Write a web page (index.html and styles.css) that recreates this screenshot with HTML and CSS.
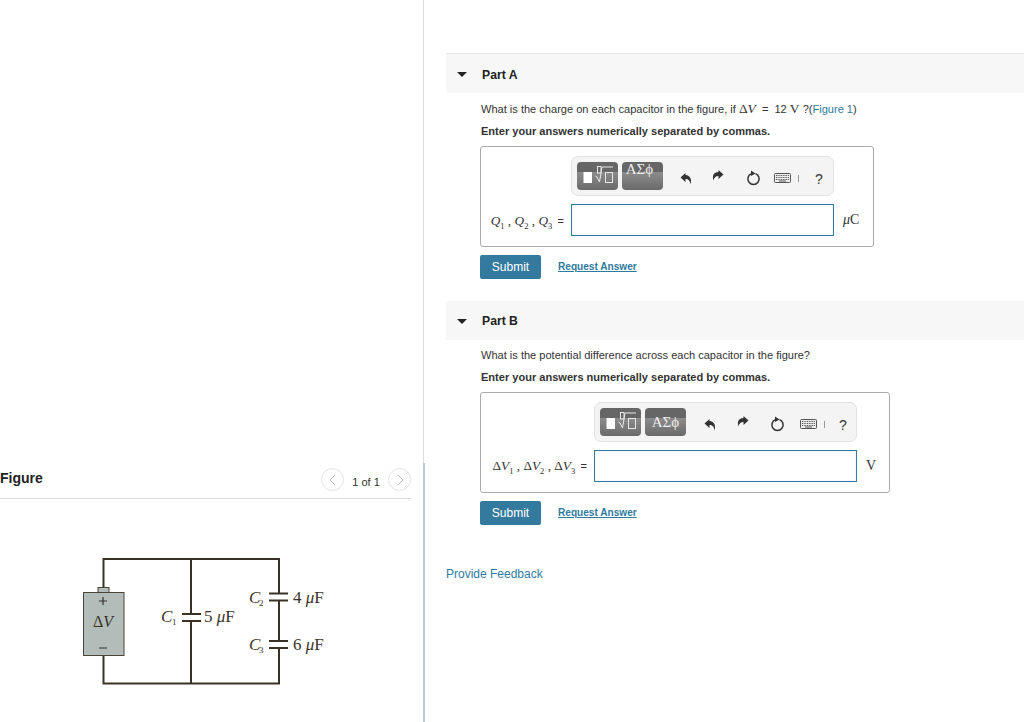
FILE: index.html
```html
<!DOCTYPE html>
<html lang="en">
<head>
<meta charset="utf-8">
<title>Capacitors</title>
<link rel="stylesheet" href="styles.css">
</head>
<body>
<div class="page">
  <aside class="figure-pane">
    <header class="figure-head">
      <h2 class="figure-title">Figure</h2>
      <div class="pager">
        <span class="pager-btn"><svg width="22" height="22" viewBox="0 0 22 22"><path d="M13 6l-5 5 5 5" class="chev"/></svg></span>
        <span class="pager-text">1 of 1</span>
        <span class="pager-btn"><svg width="22" height="22" viewBox="0 0 22 22"><path d="M9 6l5 5-5 5" class="chev"/></svg></span>
      </div>
    </header>
    <svg class="circuit" width="411" height="223" viewBox="0 499 411 223">
      <path class="wire" d="M103.5 588V559H279V593M279 601V641M279 649V683.5H103.5V655M191 559V614M191 621.500V684"/>
      <rect class="batt-cap" x="98" y="587.500" width="11" height="5"/>
      <rect class="batt" x="83.500" y="592.500" width="40.500" height="63"/>
      <path class="sign" d="M99 601h8M103 597v8M99 648h8"/>
      <path class="plate" d="M182 614h19M182 621h19M269 593.500h19M269 600.500h19M269 641h19M269 648h19"/>
      <text class="ckt ckt-dv" x="93" y="627">Δ<tspan class="ital">V</tspan></text>
      <text class="ckt ital" x="161" y="622">C</text><text class="ckt-sub" x="172" y="625">1</text>
      <text class="ckt" x="204" y="622">5 <tspan class="ital">μ</tspan>F</text>
      <text class="ckt ital" x="249" y="603">C</text><text class="ckt-sub" x="259" y="606">2</text>
      <text class="ckt" x="293" y="603">4 <tspan class="ital">μ</tspan>F</text>
      <text class="ckt ital" x="249" y="650">C</text><text class="ckt-sub" x="259" y="653">3</text>
      <text class="ckt" x="293" y="650">6 <tspan class="ital">μ</tspan>F</text>
    </svg>
  </aside>
  <div class="divider"><div class="divider-top"></div><div class="divider-bottom"></div></div>
  <main class="main">
    <section class="part part-first">
      <div class="part-head"><span class="caret"></span><h3 class="part-title">Part A</h3></div>
      <p class="question">What is the charge on each capacitor in the figure, if <span class="math">Δ<i>V</i></span> <span class="q-eq">=</span> 12 <span class="math">V</span> ?(<a class="link-plain" href="#">Figure 1</a>)</p>
      <p class="instruction">Enter your answers numerically separated by commas.</p>
      <div class="answer-box">
        <div class="answer-grid grid-a">
          <div class="toolbar">
            <span class="tool-btn"><svg width="30" height="24" viewBox="0 0 30 24"><rect x=".5" y="8" width="8.500" height="11" fill="#fff"/><rect x="14.500" y="2.500" width="3.500" height="6.500" class="ico-line"/><path class="ico-line" d="M12.500 12l1.500 1 2.500 5 2.500-15h11"/><rect x="22.500" y="8.500" width="7" height="10" class="ico-line"/></svg></span>
            <span class="tool-btn tool-greek">ΑΣϕ</span>
            <span class="tool-ico ti-undo"><svg width="13" height="13" viewBox="0 0 13 13"><path d="M5.500 1L0.500 5.500 5.500 10V7c3 0 4.500 1.500 5 5.500 1.500-5 0-9-5-9.500z" fill="#333"/></svg></span>
            <span class="tool-ico ti-redo"><svg width="13" height="13" viewBox="0 0 13 13"><path d="M7.500 1L12.500 5.500 7.500 10V7c-3 0-4.500 1.500-5 4.500-1.500-5 0-8 5-8.500z" fill="#333"/></svg></span>
            <span class="tool-ico ti-reset"><svg width="15" height="16" viewBox="0 0 15 16"><path d="M9.500 3.600a5.600 5.600 0 1 1-4 0" fill="none" stroke="#333" stroke-width="1.500"/><path d="M5 .5l4.500 3L5 6z" fill="#333"/></svg></span>
            <span class="tool-ico ti-kbd"><svg width="17" height="10" viewBox="0 0 17 10"><rect x=".5" y=".5" width="16" height="9" rx="1" fill="#eee" stroke="#555"/><path d="M2 2.500h13M2 4.500h13M2 6.500h13" stroke="#555" stroke-dasharray="1 .7"/><path d="M5 8h7" stroke="#555"/></svg></span>
            <span class="tool-sep"></span>
            <span class="tool-help">?</span>
          </div>
          <span></span>
          <div class="math-label"><i>Q</i><sub>1</sub> , <i>Q</i><sub>2</sub> , <i>Q</i><sub>3</sub> <span class="eq">=</span></div>
          <input class="answer-input" type="text" aria-label="answer A">
          <span class="unit"><i>μ</i>C</span>
        </div>
      </div>
      <div class="actions"><button class="submit" type="button">Submit</button><a class="request" href="#">Request Answer</a></div>
    </section>
    <section class="part part-second">
      <div class="part-head"><span class="caret"></span><h3 class="part-title">Part B</h3></div>
      <p class="question">What is the potential difference across each capacitor in the figure?</p>
      <p class="instruction">Enter your answers numerically separated by commas.</p>
      <div class="answer-box box-b">
        <div class="answer-grid grid-b">
          <div class="toolbar">
            <span class="tool-btn"><svg width="30" height="24" viewBox="0 0 30 24"><rect x=".5" y="8" width="8.500" height="11" fill="#fff"/><rect x="14.500" y="2.500" width="3.500" height="6.500" class="ico-line"/><path class="ico-line" d="M12.500 12l1.500 1 2.500 5 2.500-15h11"/><rect x="22.500" y="8.500" width="7" height="10" class="ico-line"/></svg></span>
            <span class="tool-btn tool-greek">ΑΣϕ</span>
            <span class="tool-ico ti-undo"><svg width="13" height="13" viewBox="0 0 13 13"><path d="M5.500 1L0.500 5.500 5.500 10V7c3 0 4.500 1.500 5 5.500 1.500-5 0-9-5-9.500z" fill="#333"/></svg></span>
            <span class="tool-ico ti-redo"><svg width="13" height="13" viewBox="0 0 13 13"><path d="M7.500 1L12.500 5.500 7.500 10V7c-3 0-4.500 1.500-5 4.500-1.500-5 0-8 5-8.500z" fill="#333"/></svg></span>
            <span class="tool-ico ti-reset"><svg width="15" height="16" viewBox="0 0 15 16"><path d="M9.500 3.600a5.600 5.600 0 1 1-4 0" fill="none" stroke="#333" stroke-width="1.500"/><path d="M5 .5l4.500 3L5 6z" fill="#333"/></svg></span>
            <span class="tool-ico ti-kbd"><svg width="17" height="10" viewBox="0 0 17 10"><rect x=".5" y=".5" width="16" height="9" rx="1" fill="#eee" stroke="#555"/><path d="M2 2.500h13M2 4.500h13M2 6.500h13" stroke="#555" stroke-dasharray="1 .7"/><path d="M5 8h7" stroke="#555"/></svg></span>
            <span class="tool-sep"></span>
            <span class="tool-help">?</span>
          </div>
          <span></span>
          <div class="math-label">Δ<i>V</i><sub>1</sub> , Δ<i>V</i><sub>2</sub> , Δ<i>V</i><sub>3</sub> <span class="eq">=</span></div>
          <input class="answer-input" type="text" aria-label="answer B">
          <span class="unit">V</span>
        </div>
      </div>
      <div class="actions"><button class="submit" type="button">Submit</button><a class="request" href="#">Request Answer</a></div>
    </section>
    <a class="feedback" href="#">Provide Feedback</a>
  </main>
</div>
</body>
</html>
```
FILE: styles.css
```css
* { box-sizing: border-box; }
html, body { margin: 0; padding: 0; height: 722px; overflow: hidden; background: #fff; }
body { font-family: "Liberation Sans", Arial, sans-serif; color: #333; }
.page { display: flex; height: 722px; }

.figure-pane { width: 423px; flex: none; padding-right: 12px; display: flex; flex-direction: column; justify-content: flex-end; }
.figure-head { display: flex; align-items: center; justify-content: space-between; height: 32px; border-bottom: 1px solid #ddd; padding-bottom: 6px; }
.figure-title { margin: 0; font-size: 14px; font-weight: 700; color: #222; position: relative; top: -2px; }
.pager { display: flex; align-items: center; gap: 8px; }
.pager-btn { width: 23px; height: 23px; border: 1px solid #e2e2e2; border-radius: 50%; display: flex; align-items: center; justify-content: center; }
.pager-btn svg { flex: none; }
.chev { fill: none; stroke: #bbb; stroke-width: 1; }
.pager-text { font-size: 11px; color: #333; width: 28px; position: relative; top: 2px; text-align: center; }
.circuit { display: block; }
.wire { fill: none; stroke: #3b3226; stroke-width: 2; }
.plate { fill: none; stroke: #3b3226; stroke-width: 2; }
.batt { fill: #b2bdb9; stroke: #4a4436; stroke-width: 1; }
.batt-cap { fill: #b2bdb9; stroke: #4a4436; stroke-width: 1; }
.sign { fill: none; stroke: #333; stroke-width: 1.200; }
.ckt { font-family: "Liberation Serif", serif; font-size: 17px; fill: #3b3226; }
.ckt-dv { font-size: 16px; }
.ital { font-style: italic; }
.ckt-sub { font-family: "Liberation Serif", serif; font-size: 9px; fill: #3b3226; }

.divider { width: 2px; flex: none; display: flex; flex-direction: column; }
.divider-top { height: 463px; width: 1px; background: #ddd; }
.divider-bottom { flex: 1; background: #bccbdc; }

.main { flex: 1; padding: 53px 0 0 21px; min-width: 0; }
.part { margin-bottom: 0; }
.part-first { margin-bottom: 22px; }
.part-head { display: flex; align-items: center; height: 40px; background: #f7f7f7; padding: 1px 0 0 11px; }
.part-second .part-head { height: 39px; }
.part-first .part-head { border-top: 1px solid #e6e6e6; padding-top: 2px; }
.part-second .question { margin-top: 7px; }
.caret { width: 0; height: 0; border-left: 5px solid transparent; border-right: 5px solid transparent; border-top: 5px solid #222; }
.part-title { margin: 0 0 0 15px; font-size: 12.200px; font-weight: 700; color: #222; }
.question { margin: 8px 0 0 35px; font-size: 11.050px; line-height: 16px; height: 16px; color: #333; white-space: nowrap; }
.math { font-family: "Liberation Serif", serif; font-size: 13.500px; }
.q-eq { margin: 0 3px; }
.link-plain { color: #2f7ba0; text-decoration: none; }
.instruction { margin: 6px 0 0 35px; font-size: 11.050px; line-height: 16px; font-weight: 700; color: #333; }
.answer-box { margin: 7px 0 0 34px; width: 394px; height: 101px; border: 1px solid #aaa; border-radius: 3px; padding: 9px 0 0 0; }
.box-b { width: 410px; }
.answer-grid { display: grid; row-gap: 8px; align-items: center; }
.grid-a { grid-template-columns: 90px 263px 1fr; }
.grid-b { grid-template-columns: 113px 263px 1fr; }
.toolbar { grid-column: 2; height: 40px; background: #f4f4f4; border: 1px solid #e2e2e2; border-radius: 7px; display: flex; align-items: center; padding-left: 5px; position: relative; }
.tool-btn { width: 41px; height: 28px; border-radius: 4px; background: linear-gradient(#666 0, #666 35%, #8c8c8c 36%, #6a6a6a 100%); display: flex; align-items: center; justify-content: center; margin-right: 4px; }
.ico-line { fill: none; stroke: #e8e8e8; stroke-width: 1; }
.tool-greek { font-family: "Liberation Serif", serif; font-size: 15px; color: #eee; align-items: flex-start; line-height: 15px; padding-right: 6px; }
.grid-b .tool-greek { align-items: center; padding-right: 0; }
.tool-ico { display: flex; }
.ti-undo { margin-left: 13px; margin-top: 4px; }
.ti-redo { margin-left: 18px; margin-top: -1px; }
.ti-reset { margin-left: 22px; margin-top: 4px; }
.ti-kbd { margin-left: 13px; margin-top: 3px; }
.tool-sep { width: 1px; height: 7px; background: #999; margin: 5px 0 0 7px; }
.tool-help { font-size: 14px; color: #333; margin: 0 0 0 16px; position: relative; top: 3px; }
.grid-b .ti-undo { margin-left: 14px; }
.grid-b .ti-redo { margin-left: 19px; }
.grid-b .ti-reset { margin-left: 21px; }
.grid-b .ti-kbd { margin-left: 15px; }
.grid-b .tool-help { margin-left: 14px; }
.math-label { grid-column: 1; text-align: right; padding-right: 7px; font-family: "Liberation Serif", serif; font-size: 13.300px; color: #333; white-space: nowrap; position: relative; top: 1px; }
.grid-b .math-label { top: 0; }
.math-label sub { font-size: 8.500px; line-height: 0; }
.eq { font-family: "Liberation Sans", sans-serif; font-size: 11px; margin-left: 2px; }
.answer-input { width: 263px; height: 32px; border: 1px solid #2f7a9e; box-shadow: inset 0 0 1px #9ac; background: #fff; padding: 0; margin: 0; }
.unit { font-family: "Liberation Serif", serif; font-size: 14px; color: #333; padding-left: 9px; }
.actions { display: flex; align-items: center; margin: 8px 0 0 34px; }
.submit { width: 61px; height: 24px; background: #337a9e; color: #fff; border: 0; border-radius: 2px; padding: 0; font: 12px "Liberation Sans", Arial, sans-serif; }
.request { margin-left: 17px; font-size: 10.100px; font-weight: 700; color: #2f7ba0; text-decoration: underline; position: relative; top: -1px; }
.feedback { display: block; margin-top: 41px; font-size: 12px; line-height: 16px; color: #2f7ba0; text-decoration: none; }
```
